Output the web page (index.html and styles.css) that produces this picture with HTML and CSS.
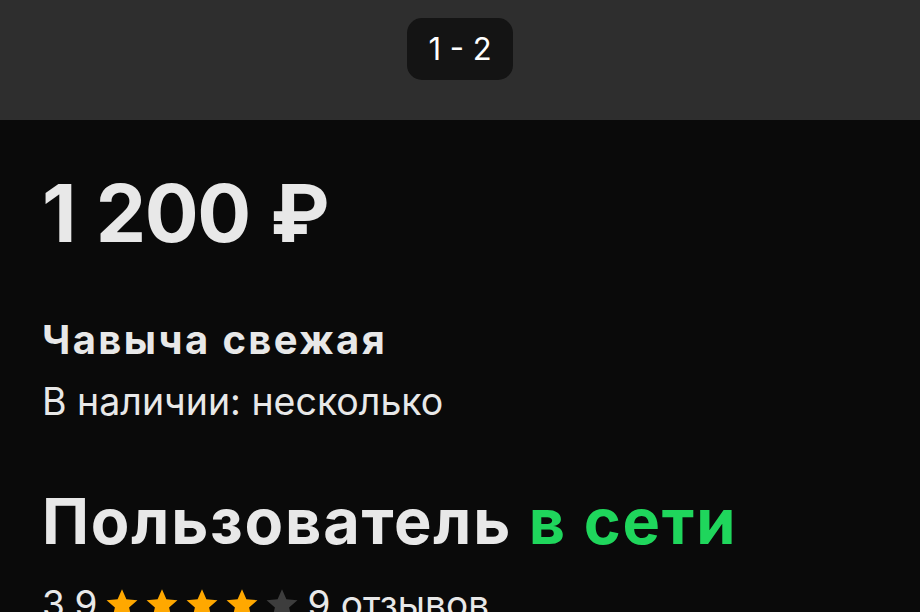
FILE: index.html
```html
<!DOCTYPE html>
<html lang="ru">
<head>
  <meta charset="UTF-8" />
  <meta name="viewport" content="width=device-width, initial-scale=1" />
  <title>Чавыча свежая</title>
  <link rel="stylesheet" href="styles.css">
</head>
<body>
  <div class="gallery">
    <div class="counter">1 - 2</div>
  </div>

  <div class="item">
    <div class="price">1 200 ₽</div>
    <h1 class="title">Чавыча свежая</h1>
    <div class="stock">В наличии: несколько</div>

    <div class="seller">Пользователь <span class="online">в сети</span></div>
    <div class="rating">
      <span class="score">3,9</span>
      <span class="stars">
        <svg class="star on" viewBox="0 0 24 24"><path d="M12 1.5l3.1 7.2 7.8.6-5.9 5.1 1.8 7.6L12 17.9 5.2 22l1.8-7.6L1.1 9.3l7.8-.6z"/></svg>
        <svg class="star on" viewBox="0 0 24 24"><path d="M12 1.5l3.1 7.2 7.8.6-5.9 5.1 1.8 7.6L12 17.9 5.2 22l1.8-7.6L1.1 9.3l7.8-.6z"/></svg>
        <svg class="star on" viewBox="0 0 24 24"><path d="M12 1.5l3.1 7.2 7.8.6-5.9 5.1 1.8 7.6L12 17.9 5.2 22l1.8-7.6L1.1 9.3l7.8-.6z"/></svg>
        <svg class="star on" viewBox="0 0 24 24"><path d="M12 1.5l3.1 7.2 7.8.6-5.9 5.1 1.8 7.6L12 17.9 5.2 22l1.8-7.6L1.1 9.3l7.8-.6z"/></svg>
        <svg class="star" viewBox="0 0 24 24"><path d="M12 1.5l3.1 7.2 7.8.6-5.9 5.1 1.8 7.6L12 17.9 5.2 22l1.8-7.6L1.1 9.3l7.8-.6z"/></svg>
      </span>
      <span class="reviews">9 отзывов</span>
    </div>
  </div>
</body>
</html>
```

FILE: styles.css
```css
* {
  margin: 0;
  padding: 0;
  box-sizing: border-box;
}
body {
  font-family: 'Inter', 'Noto Sans', sans-serif;
  background-color: #0a0a0a;
  color: #e8e8e8;
  width: 920px;
  height: 612px;
  overflow: hidden;
}
.gallery {
  height: 120px;
  background: #2e2e2e;
  display: flex;
  justify-content: center;
  padding-top: 18px;
}
.counter {
  height: 62px;
  padding: 0 21px;
  border-radius: 15px;
  background: #141414;
  color: #ffffff;
  font-size: 31px;
  line-height: 62px;
  font-weight: 400;
}
.item {
  padding: 53px 42px 0;
}
.price {
  font-size: 80px;
  line-height: 1;
  font-weight: 700;
  word-spacing: 3px;
  letter-spacing: -1.4px;
}
.title {
  margin-top: 63px;
  font-size: 40px;
  line-height: 1.2;
  font-weight: 700;
  letter-spacing: 2.4px;
}
.stock {
  margin-top: 15px;
  font-size: 37.5px;
  line-height: 1.2;
  font-weight: 400;
}
.seller {
  margin-top: 60px;
  font-size: 63px;
  line-height: 1.2;
  font-weight: 700;
  letter-spacing: 1.8px;
}
.online {
  color: #1fd65c;
}
.rating {
  margin-top: 22px;
  display: flex;
  align-items: center;
  font-size: 37px;
  line-height: 1.2;
}
.stars {
  display: flex;
  gap: 6px;
  margin: 0 8px 0 8px;
}
.star {
  width: 34px;
  height: 34px;
  fill: #3d3d3d;
}
.star.on {
  fill: #ffa800;
}
```
